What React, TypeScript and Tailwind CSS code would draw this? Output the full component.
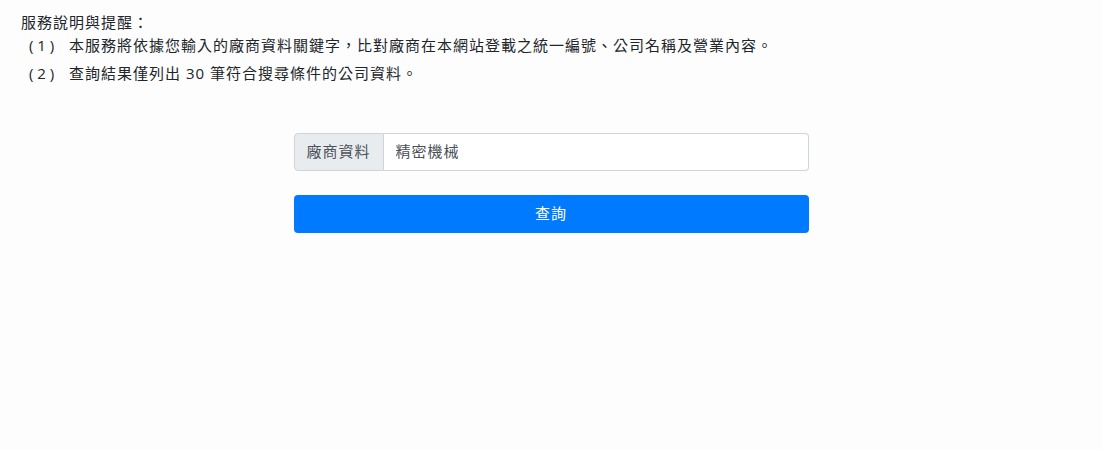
import React from "react";

const FONT = "font-['Open_Sans','Noto_Sans_CJK_TC',sans-serif]";

const NOTES = [
  "本服務將依據您輸入的廠商資料關鍵字，比對廠商在本網站登載之統一編號、公司名稱及營業內容。",
  "查詢結果僅列出 30 筆符合搜尋條件的公司資料。",
];

export default function App() {
  const [keyword, setKeyword] = React.useState("精密機械");

  return (
    <div className={`min-h-[450px] w-full bg-[#fdfdfd] text-[#212529] ${FONT}`}>
      <div className="pl-[21px] pt-[11px] text-[15px] leading-[22.5px] tracking-[1px]">
        <div>服務說明與提醒：</div>
        {NOTES.map((note, i) => (
          <div key={i} className={`flex ${i > 0 ? "mt-[6px]" : ""}`}>
            <span className="w-[48px] shrink-0 pl-[8px] tracking-[0px] whitespace-pre">
              {`( ${i + 1} )`}
            </span>
            <span>{note}</span>
          </div>
        ))}
      </div>

      <div className="mx-auto mt-[48px] w-[515px]">
        <div className="flex h-[38px] w-full">
          <span className="flex items-center rounded-l-[4px] border border-[#ced4da] bg-[#e9ecef] px-[12px] text-[15px] tracking-[1px] text-[#495057]">
            廠商資料
          </span>
          <input
            value={keyword}
            onChange={(e) => setKeyword(e.target.value)}
            className="min-w-0 flex-1 rounded-r-[4px] border border-l-0 border-[#ced4da] bg-white px-[12px] text-[15px] tracking-[1px] text-[#495057] outline-none"
          />
        </div>
        <button className="mt-[24px] flex h-[38px] w-full items-center justify-center rounded-[4px] bg-[#007bff] text-[15px] tracking-[1px] text-white">
          查詢
        </button>
      </div>
    </div>
  );
}
